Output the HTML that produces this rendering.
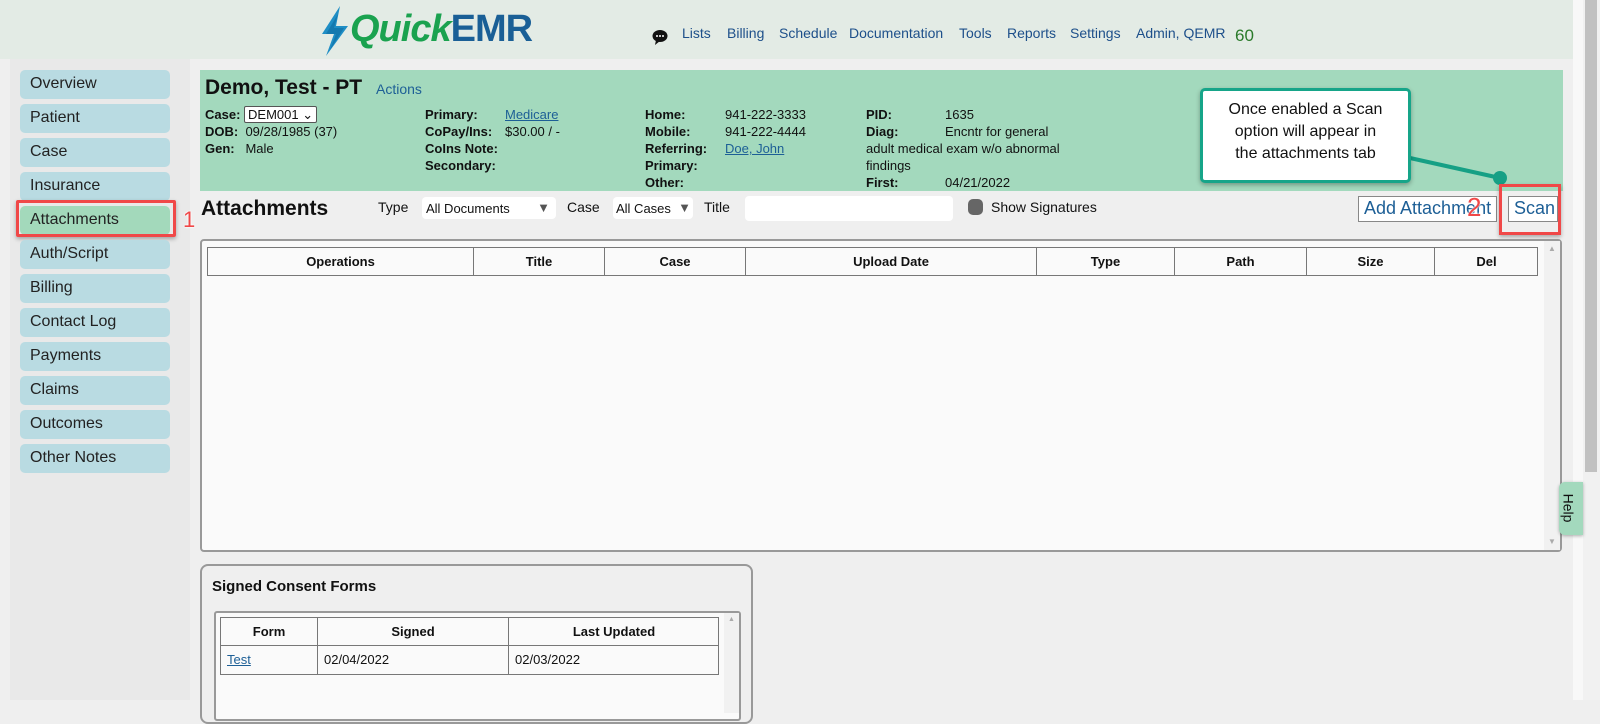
<!DOCTYPE html>
<html><head><meta charset="utf-8"><style>
*{box-sizing:border-box;margin:0;padding:0}
body{width:1600px;height:700px;overflow:hidden;background:#efefef;font-family:"Liberation Sans",Arial,sans-serif;color:#111;position:relative;font-size:13px}
.a{position:absolute}
.top{left:0;top:0;width:1583px;height:59px;background:#e3ebe5}
.nav{top:25px;font-size:14px;color:#1d4f8a}
.sb{left:20px;width:150px;height:29px;background:#b9dbe2;border-radius:5px;font-size:16px;padding:5px 10px;color:#222}
.lbl{font-weight:bold}
.row{font-size:13px;line-height:17px;white-space:nowrap}
.th{position:absolute;top:0;height:100%;border-left:1px solid #777;font-weight:bold;font-size:13px;text-align:center;line-height:27px}
</style></head><body>
<div class="a top"></div>
<svg class="a" style="left:318px;top:6px" width="40" height="50" viewBox="0 0 40 50"><polygon points="22,0 4,28 16,28 8,50 30,20 18,20" fill="#1f8ec5"/><polygon points="20,8 8,28 18,28 12,44 26,22 16,22" fill="#0e6aa0" opacity=".6"/></svg>
<div class="a" style="left:350px;top:8px;font-size:38px;font-weight:bold;font-style:italic;color:#1aa24f;letter-spacing:-1px">Quick<span style="color:#1a5f96;font-style:normal">EMR</span></div>
<svg class="a" style="left:652px;top:29px" width="16" height="16" viewBox="0 0 16 16"><ellipse cx="8" cy="7" rx="7.5" ry="6" fill="#111"/><polygon points="4,11 3,16 8,12" fill="#111"/><circle cx="5" cy="7" r="1" fill="#fff"/><circle cx="8" cy="7" r="1" fill="#fff"/><circle cx="11" cy="7" r="1" fill="#fff"/></svg>
<div class="a nav" style="left:682px">Lists</div>
<div class="a nav" style="left:727px">Billing</div>
<div class="a nav" style="left:779px">Schedule</div>
<div class="a nav" style="left:849px">Documentation</div>
<div class="a nav" style="left:959px">Tools</div>
<div class="a nav" style="left:1007px">Reports</div>
<div class="a nav" style="left:1070px">Settings</div>
<div class="a nav" style="left:1136px">Admin, QEMR</div>
<div class="a" style="left:1235px;top:26px;font-size:17px;color:#2a7a2a">60</div>
<div class="a" style="left:1573px;top:0;width:10px;height:700px;background:#f8f8f8"></div>
<div class="a" style="left:1583px;top:0;width:17px;height:700px;background:#f1f1f1"></div>
<div class="a" style="left:1585px;top:0;width:12px;height:472px;background:#c1c1c1"></div>
<div class="a" style="left:10px;top:59px;width:180px;height:641px;background:#e9e9e9"></div>
<div class="a sb" style="top:70px">Overview</div>
<div class="a sb" style="top:104px">Patient</div>
<div class="a sb" style="top:138px">Case</div>
<div class="a sb" style="top:172px">Insurance</div>
<div class="a sb" style="top:206px;background:#a3d9bb">Attachments</div>
<div class="a" style="left:16px;top:200px;width:160px;height:37px;border:3px solid #f04848;border-radius:2px;box-shadow:0 2px 4px rgba(0,0,0,.3)"></div>
<div class="a" style="left:183px;top:207px;font-size:22px;color:#f04848;text-shadow:0 0 2px #fff,0 0 2px #fff">1</div>
<div class="a sb" style="top:240px">Auth/Script</div>
<div class="a sb" style="top:274px">Billing</div>
<div class="a sb" style="top:308px">Contact Log</div>
<div class="a sb" style="top:342px">Payments</div>
<div class="a sb" style="top:376px">Claims</div>
<div class="a sb" style="top:410px">Outcomes</div>
<div class="a sb" style="top:444px">Other Notes</div>
<div class="a" style="left:200px;top:70px;width:1363px;height:121px;background:#a3d9bd"></div>
<div class="a" style="left:205px;top:76px;font-size:21px;font-weight:bold">Demo, Test - PT</div>
<div class="a" style="left:376px;top:81px;font-size:14px;color:#1d5f96">Actions</div>
<div class="a row" style="left:205px;top:106px"><span class="lbl">Case:</span> <span style="display:inline-block;background:#fff;border:1px solid #555;border-radius:2px;padding:0 3px;font-size:13px;line-height:15px">DEM001 &#8964;</span><br><span class="lbl">DOB:</span>&nbsp; 09/28/1985 (37)<br><span class="lbl">Gen:</span>&nbsp;&nbsp; Male</div>
<div class="a row" style="left:425px;top:106px"><span class="lbl">Primary:<br>CoPay/Ins:<br>CoIns Note:<br>Secondary:</span></div>
<div class="a row" style="left:505px;top:106px"><u style="color:#1d5f96">Medicare</u><br>$30.00 / -</div>
<div class="a row lbl" style="left:645px;top:106px">Home:<br>Mobile:<br>Referring:<br>Primary:<br>Other:</div>
<div class="a row" style="left:725px;top:106px">941-222-3333<br>941-222-4444<br><u style="color:#1d5f96">Doe, John</u></div>
<div class="a row" style="left:866px;top:106px;width:240px"><b>PID:</b><span class="a" style="left:79px">1635</span><br><b>Diag:</b><span class="a" style="left:79px">Encntr for general</span><br>adult medical exam w/o abnormal<br>findings<br><b>First:</b><span class="a" style="left:79px">04/21/2022</span></div>
<svg class="a" style="left:1400px;top:150px" width="120" height="40"><line x1="10" y1="8" x2="100" y2="28" stroke="#16a085" stroke-width="4"/><circle cx="100" cy="28" r="7" fill="#16a085"/></svg>
<div class="a" style="left:1200px;top:88px;width:211px;height:95px;background:#fff;border:3px solid #16a589;border-radius:5px;box-shadow:0 2px 5px rgba(0,0,0,.3);text-align:center;font-size:16px;line-height:22px;padding-top:8px">Once enabled a Scan<br>option will appear in<br>the attachments tab</div>
<div class="a" style="left:201px;top:197px;font-size:21px;font-weight:bold">Attachments</div>
<div class="a" style="left:378px;top:199px;font-size:14px">Type</div>
<div class="a" style="left:422px;top:197px;width:134px;height:22px;background:#fff;border-radius:4px;font-size:13px;padding:4px 4px">All Documents<span class="a" style="right:6px;top:3px;color:#555">&#9660;</span></div>
<div class="a" style="left:567px;top:199px;font-size:14px">Case</div>
<div class="a" style="left:613px;top:197px;width:80px;height:22px;background:#fff;border-radius:4px;font-size:13px;padding:4px 3px">All Cases<span class="a" style="right:2px;top:3px;color:#555">&#9660;</span></div>
<div class="a" style="left:704px;top:199px;font-size:14px">Title</div>
<div class="a" style="left:745px;top:196px;width:208px;height:25px;background:#fff;border-radius:4px"></div>
<div class="a" style="left:968px;top:199px;width:15px;height:16px;background:#666;border-radius:5px"></div>
<div class="a" style="left:991px;top:199px;font-size:14px">Show Signatures</div>
<div class="a" style="left:1358px;top:196px;width:139px;height:26px;background:#fff;border:1px solid #888;font-size:18px;color:#1d5f96;padding:1px 5px;white-space:nowrap;overflow:hidden">Add Attachment</div>
<div class="a" style="left:1467px;top:192px;font-size:26px;color:#f04848;text-shadow:0 0 2px #fff,0 0 2px #fff">2</div>
<div class="a" style="left:1508px;top:196px;width:50px;height:26px;background:#fff;border:1px solid #888;font-size:18px;color:#1d5f96;padding:1px 5px">Scan</div>
<div class="a" style="left:1499px;top:184px;width:62px;height:51px;border:3px solid #f04848;box-shadow:0 2px 4px rgba(0,0,0,.3)"></div>
<div class="a" style="left:200px;top:239px;width:1362px;height:313px;background:#fafafa;border:2px solid #999;border-radius:4px"></div>
<div class="a" style="left:1544px;top:241px;width:16px;height:309px;background:#f1f1f1"></div>
<div class="a" style="left:1548px;top:244px;font-size:8px;color:#aaa">&#9650;</div>
<div class="a" style="left:1548px;top:537px;font-size:8px;color:#aaa">&#9660;</div>
<div class="a" style="left:207px;top:247px;width:1331px;height:29px;border:1px solid #777;border-left:none">
<div class="th" style="left:0;width:266px">Operations</div>
<div class="th" style="left:266px;width:131px">Title</div>
<div class="th" style="left:397px;width:141px">Case</div>
<div class="th" style="left:538px;width:291px">Upload Date</div>
<div class="th" style="left:829px;width:138px">Type</div>
<div class="th" style="left:967px;width:132px">Path</div>
<div class="th" style="left:1099px;width:128px">Size</div>
<div class="th" style="left:1227px;width:104px">Del</div>
</div>
<div class="a" style="left:1559px;top:482px;width:24px;height:53px;background:#a3d9bd;border-radius:6px 0 0 6px;box-shadow:0 1px 3px rgba(0,0,0,.3)"><div style="transform:rotate(90deg);font-size:14px;position:absolute;left:-5px;top:18px">Help</div></div>
<div class="a" style="left:200px;top:564px;width:553px;height:160px;border:2px solid #999;border-radius:8px;background:#efefef"></div>
<div class="a" style="left:212px;top:578px;font-size:15px;font-weight:bold">Signed Consent Forms</div>
<div class="a" style="left:214px;top:611px;width:527px;height:110px;background:#fafafa;border:2px solid #999;border-radius:3px"></div>
<div class="a" style="left:724px;top:613px;width:15px;height:100px;background:#f1f1f1"></div>
<div class="a" style="left:728px;top:616px;font-size:7px;color:#aaa">&#9650;</div>
<div class="a" style="left:220px;top:617px;width:499px;height:58px;border:1px solid #777;border-left:none">
<div class="th" style="left:0;width:97px;height:28px;border-bottom:1px solid #777">Form</div>
<div class="th" style="left:97px;width:191px;height:28px;border-bottom:1px solid #777">Signed</div>
<div class="th" style="left:288px;width:211px;height:28px;border-bottom:1px solid #777">Last Updated</div>
<div class="th" style="left:0;top:28px;height:28px;width:97px;font-weight:normal;text-align:left;padding-left:6px"><u style="color:#1d5f96">Test</u></div>
<div class="th" style="left:97px;top:28px;height:28px;width:191px;font-weight:normal;text-align:left;padding-left:6px">02/04/2022</div>
<div class="th" style="left:288px;top:28px;height:28px;width:211px;font-weight:normal;text-align:left;padding-left:6px">02/03/2022</div>
</div>
</body></html>
